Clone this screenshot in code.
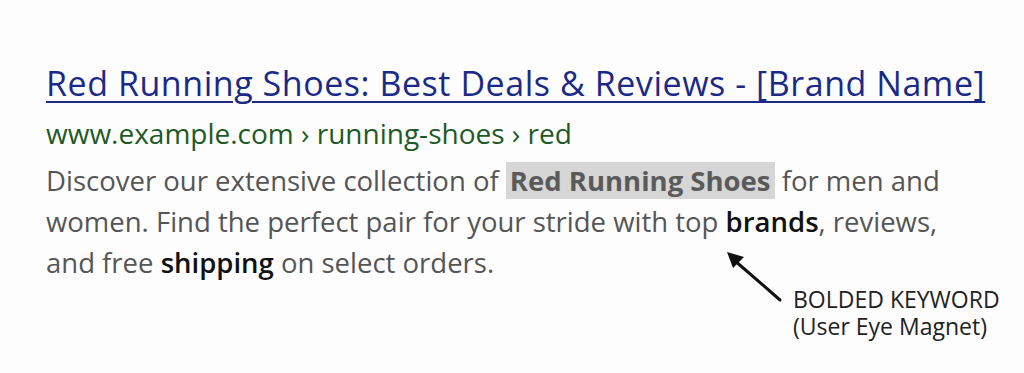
import React from "react";

export default function App() {
  return (
    <div
      className="relative w-[1024px] h-[373px] overflow-hidden bg-[#fdfdfd] pl-[46px] pt-[63px]"
      style={{ fontFamily: '"Open Sans", "Noto Sans", sans-serif' }}
    >
      <div className="text-[34px] leading-[40px] tracking-[0.55px] text-[#1b2a86] underline decoration-[2px] underline-offset-[5px] whitespace-nowrap">
        Red Running Shoes: Best Deals &amp; Reviews - [Brand Name]
      </div>
      <div className="mt-[12px] text-[28px] leading-[36px] text-[#1f5a25] whitespace-nowrap">
        www.example.com › running-shoes › red
      </div>
      <p className="mt-[9px] w-[940px] text-[27.5px] leading-[41px] text-[#555555]">
        Discover our extensive collection of{" "}
        <span className="bg-[#d6d6d6] px-[4px] font-bold text-[#5a5a5a]">Red Running Shoes</span>{" "}
        for men and women. Find the perfect pair for your stride with top{" "}
        <b className="font-semibold text-[#111111]">brands</b>, reviews, and free{" "}
        <b className="font-semibold text-[#111111]">shipping</b> on select orders.
      </p>

      <svg
        className="absolute left-[720px] top-[244px]"
        width="70"
        height="64"
        viewBox="0 0 70 64"
      >
        <line x1="60" y1="56" x2="14" y2="16" stroke="#111" strokeWidth="3" strokeLinecap="round" />
        <polygon points="7,8 24,13 13,24" fill="#111" />
      </svg>

      <div className="absolute left-[793px] top-[286px] text-[23px] leading-[27px] text-[#222222]">
        <div>BOLDED KEYWORD</div>
        <div>(User Eye Magnet)</div>
      </div>
    </div>
  );
}
